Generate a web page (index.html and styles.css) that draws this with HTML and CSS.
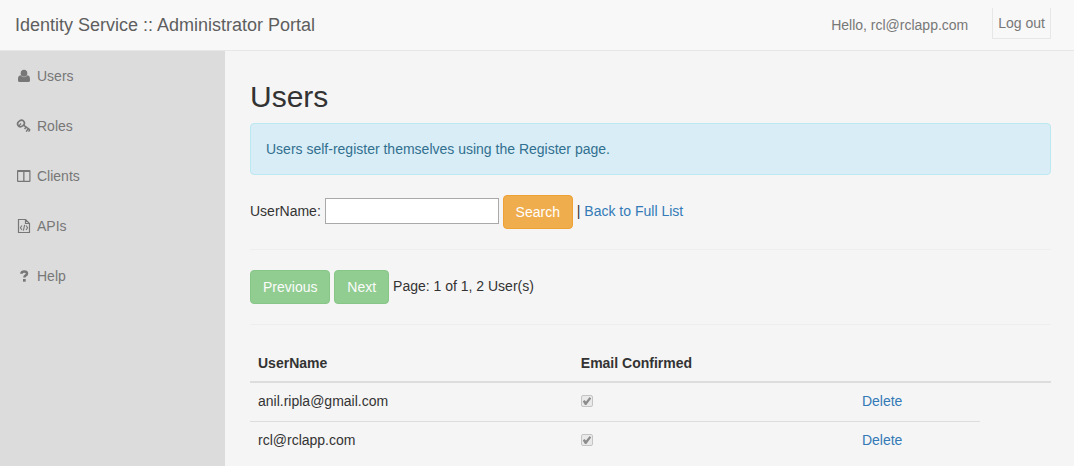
FILE: index.html
```html
<!DOCTYPE html>
<html lang="en">
<head>
<meta charset="utf-8">
<title>Users - Identity Service</title>
<link rel="stylesheet" href="styles.css">
</head>
<body>
<header class="navbar">
  <a class="brand" href="#">Identity Service :: Administrator Portal</a>
  <a class="hello" href="#">Hello, rcl@rclapp.com</a>
  <button class="logout" type="button">Log out</button>
</header>
<div class="layout">
  <nav class="sidebar">
    <a class="nav-link" href="#"><svg class="icon" viewBox="0 0 18 14" aria-hidden="true"><ellipse cx="9" cy="4.200" rx="3.300" ry="3.500"/><path d="M5.500 6.300C3.600 6.600 3 8.200 3 10.500V11.500Q3 13 4.700 13H13.300Q15 13 15 11.500V10.500C15 8.200 14.400 6.600 12.500 6.300Q11 8.200 9 8.200T5.500 6.300Z"/></svg>Users</a>
    <a class="nav-link" href="#"><svg class="icon" viewBox="0 0 18 14" aria-hidden="true"><g class="line"><ellipse cx="6" cy="4.500" rx="3.500" ry="2.900" transform="rotate(-35 6 4.500)" stroke-width="1.700"/><path d="M4 6.800L6 4.500" stroke-width="1.200"/><path d="M8.500 6.200L15 10.800M11.200 12.600L13.200 9.800M9.600 10L11 8.100M13.600 12.600L15 10.400" stroke-width="1.500"/></g></svg>Roles</a>
    <a class="nav-link" href="#"><svg class="icon" viewBox="0 0 18 14" aria-hidden="true"><path fill-rule="evenodd" d="M3 1H14.500Q15.500 1 15.500 2V12Q15.500 13 14.500 13H3Q2 13 2 12V2Q2 1 3 1ZM3.200 3V11.800H8.200V3ZM9.500 3V11.800H14.300V3Z"/></svg>Clients</a>
    <a class="nav-link" href="#"><svg class="icon" viewBox="0 0 18 14" aria-hidden="true"><g class="line"><path d="M3.500 .5H10.500L14.500 4.500V13.500H3.500ZM10.500 .5V4.500H14.500" stroke-width="1.200"/><path d="M7 6.500L5.400 8.800L7 11M11 6.500L12.600 8.800L11 11M9.600 5.800L8.400 11.600" stroke-width="1.100"/></g></svg>APIs</a>
    <a class="nav-link" href="#"><svg class="icon" viewBox="0 0 18 14" aria-hidden="true"><g class="line"><path d="M6.200 4.700Q6.800 2.400 9.200 2.400Q12 2.400 12 4.600Q12 6 10.400 6.700Q9.400 7.200 9.400 8.600" stroke-width="2.500"/></g><path d="M8 10H10.700V12.700H8Z"/></svg>Help</a>
  </nav>
  <main class="content">
    <h2 class="title">Users</h2>
    <div class="alert">Users self-register themselves using the Register page.</div>
    <form class="search">
      <label for="username">UserName:</label>
      <input class="search-input" id="username" type="text">
      <button class="btn btn-warning" type="submit">Search</button>
      <span>|</span>
      <a class="link" href="#">Back to Full List</a>
    </form>
    <hr class="rule">
    <div class="pager">
      <button class="btn btn-success" type="button" disabled>Previous</button>
      <button class="btn btn-success" type="button" disabled>Next</button>
      <span>Page: 1 of 1, 2 User(s)</span>
    </div>
    <hr class="rule">
    <table class="table">
      <colgroup><col class="col-name"><col class="col-email"><col class="col-action"><col></colgroup>
      <thead>
        <tr><th>UserName</th><th>Email Confirmed</th><th></th><th></th></tr>
      </thead>
      <tbody>
        <tr><td>anil.ripla@gmail.com</td><td><input class="check" type="checkbox" aria-label="Email confirmed for anil.ripla@gmail.com" checked disabled></td><td><a class="link" href="#">Delete</a></td></tr>
        <tr><td>rcl@rclapp.com</td><td><input class="check" type="checkbox" aria-label="Email confirmed for rcl@rclapp.com" checked disabled></td><td><a class="link" href="#">Delete</a></td></tr>
      </tbody>
    </table>
  </main>
</div>
</body>
</html>
```
FILE: styles.css
```css
* {
  box-sizing: border-box;
}

body {
  margin: 0;
  min-height: 100vh;
  display: flex;
  flex-direction: column;
  background: #f5f5f5;
  color: #333;
  font: 14px/20px "Liberation Sans", Arial, sans-serif;
}

a {
  text-decoration: none;
}

button,
input {
  font: inherit;
}

.navbar {
  display: flex;
  align-items: center;
  min-height: 51px;
  padding: 0 23px 0 15px;
  background: #f8f8f8;
  border-bottom: 1px solid #e7e7e7;
}

.brand {
  color: #5e5e5e;
  font-size: 18px;
}

.hello {
  margin-left: auto;
  color: #777;
}

.logout {
  align-self: flex-start;
  margin: 8px 0 0 24px;
  padding: 5px;
  border: 1px solid #e7e7e7;
  border-top: 0;
  background: #f8f8f8;
  color: #777;
}

.layout {
  flex: 1;
  display: flex;
}

.sidebar {
  flex: 0 0 225px;
  background: #dcdcdc;
}

.nav-link {
  display: flex;
  align-items: center;
  gap: 4px;
  padding: 15px;
  color: #777;
}

.icon {
  width: 18px;
  height: 14px;
  fill: #777;
}

.line {
  fill: none;
  stroke: #777;
}

.content {
  flex: 1;
  min-width: 0;
  padding: 29px 23px 0 25px;
}

.title {
  margin: 0 0 10px;
  font-size: 30px;
  font-weight: 400;
  line-height: 33px;
}

.alert {
  margin-bottom: 20px;
  padding: 15px;
  border: 1px solid #bce8f1;
  border-radius: 4px;
  background: #d9edf7;
  color: #31708f;
}

.search-input {
  width: 174px;
  height: 26px;
  padding: 2px;
  border: 1px solid #a9a9a9;
  background: #fff;
}

.btn {
  padding: 6px 12px;
  border: 1px solid;
  border-radius: 4px;
  color: #fff;
  vertical-align: middle;
}

.btn-warning {
  background: #f0ad4e;
  border-color: #eea236;
}

.btn-success {
  background: #5cb85c;
  border-color: #4cae4c;
}

.btn:disabled {
  opacity: 0.65;
}

.link {
  color: #337ab7;
}

.rule {
  margin: 20px 0;
  border: 0;
  border-top: 1px solid #eee;
}

.table {
  width: 100%;
  table-layout: fixed;
  border-collapse: collapse;
}

.col-name {
  width: 40.3%;
}

.col-email {
  width: 35.1%;
}

.col-action {
  width: 15.7%;
}

.table th,
.table td {
  padding: 8px;
  text-align: left;
  vertical-align: top;
}

.table th {
  border-bottom: 2px solid #ddd;
}

.table td {
  padding-bottom: 10px;
  border-top: 1px solid #ddd;
}

.check {
  appearance: none;
  width: 12px;
  height: 12px;
  margin: 4px 0 0;
  border: 1px solid #c4c4c4;
  border-radius: 2px;
  background: #e9e9e9;
  vertical-align: top;
}

.check:checked::before {
  content: "";
  display: block;
  width: 10px;
  height: 10px;
  background: #8c8c8c;
  clip-path: polygon(10% 55%, 25% 40%, 42% 56%, 78% 10%, 94% 25%, 45% 90%, 32% 90%);
}
```
